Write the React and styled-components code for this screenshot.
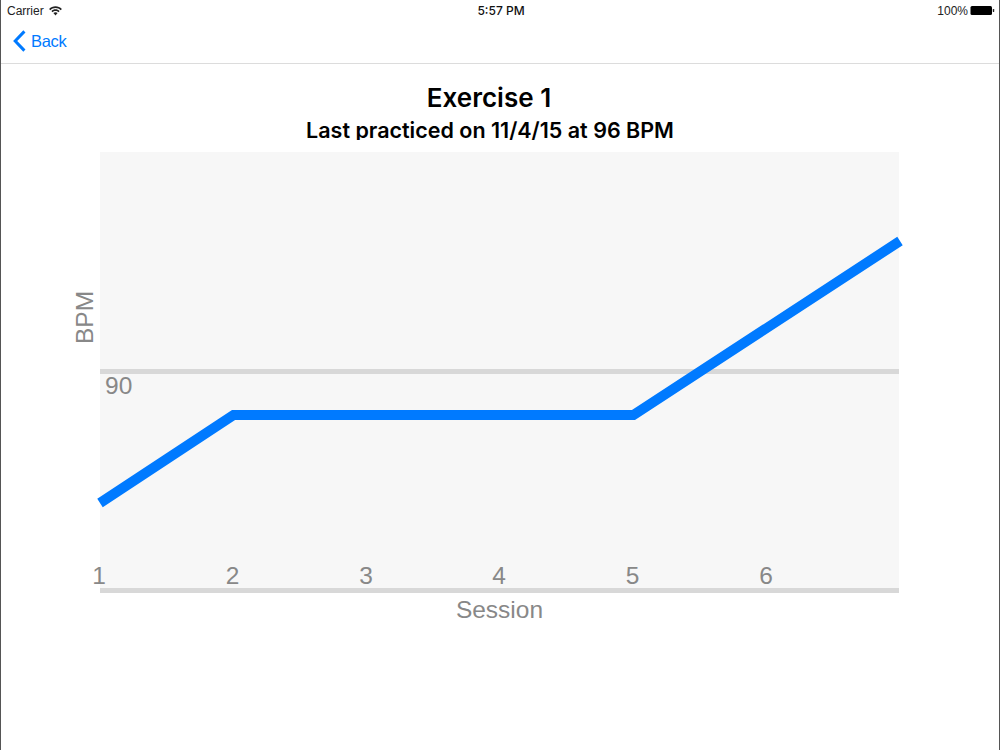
import React from "react";
import styled, { createGlobalStyle } from "styled-components";

const Global = createGlobalStyle`
  html, body { margin: 0; padding: 0; background: #fff; }
  #root { width: 1000px; height: 750px; }
`;

const Screen = styled.div`
  box-sizing: border-box;
  width: 1000px;
  height: 750px;
  overflow: hidden;
  background: #fff;
  border-left: 1px solid #555;
  border-right: 1px solid #555;
  display: flex;
  flex-direction: column;
  font-family: Inter, "Liberation Sans", sans-serif;
`;

const StatusBar = styled.div`
  height: 21px;
  padding: 0 4px 0 6px;
  display: grid;
  grid-template-columns: 1fr auto 1fr;
  align-items: center;
  font-family: "Liberation Sans", sans-serif;
  font-size: 12px;
  color: #222;
`;

const StatusLeft = styled.div`
  display: flex;
  align-items: center;
  gap: 5px;
`;

const StatusRight = styled.div`
  display: flex;
  align-items: center;
  justify-content: flex-end;
  gap: 2px;
`;

const Clock = styled.div`
  font-family: Inter, sans-serif;
  font-weight: 500;
  font-size: 12px;
  color: #111;
`;

const NavBar = styled.div`
  height: 43px;
  box-sizing: border-box;
  border-bottom: 1px solid #dcdcdc;
  display: flex;
  align-items: center;
  padding: 0 0 2px 12px;
  gap: 5px;
  color: #007aff;
  font-family: "Liberation Sans", sans-serif;
  font-size: 16.5px;
  letter-spacing: -0.3px;
`;

const Heading = styled.div`
  text-align: center;
  color: #000;
  font-weight: 600;
`;

const Title = styled(Heading)`
  width: 976px;
  margin-top: 19px;
  font-size: 26px;
  line-height: 30px;
`;

const Subtitle = styled(Heading)`
  width: 978px;
  margin-top: 3px;
  height: 24px;
  overflow: hidden;
  font-size: 21.5px;
  line-height: 28px;
`;

const Chart = styled.svg`
  display: block;
  flex: none;
`;

const AxisText = styled.text`
  font-family: "Liberation Sans", sans-serif;
  font-size: 24.5px;
  fill: #888;
`;

const sessions = [
  [99, "1"],
  [232.5, "2"],
  [366, "3"],
  [499, "4"],
  [632.5, "5"],
  [766, "6"],
];

export default function App() {
  return (
    <>
      <Global />
      <Screen>
        <StatusBar>
          <StatusLeft>
            <span>Carrier</span>
            <svg width="13" height="10" viewBox="0 0 13 10" fill="#222">
              <path d="M6.5 0.2C4 0.2 1.8 1.2 0.1 2.9L1.3 4.2C2.7 2.8 4.5 2 6.5 2S10.3 2.8 11.7 4.2L12.9 2.9C11.2 1.2 9 .2 6.5 .2Z" />
              <path d="M6.5 3.3C5 3.3 3.5 3.9 2.4 5L3.5 6.3C4.3 5.5 5.3 5 6.5 5S8.7 5.5 9.5 6.3L10.6 5C9.5 3.9 8 3.3 6.5 3.3Z" />
              <path d="M6.5 6.2C5.7 6.2 5 6.5 4.4 7.1L6.5 9.6L8.6 7.1C8 6.5 7.3 6.2 6.5 6.2Z" />
            </svg>
          </StatusLeft>
          <Clock>5:57 PM</Clock>
          <StatusRight>
            <span>100%</span>
            <svg width="25" height="11" viewBox="0 0 25 11">
              <rect x="0.5" y="1" width="21.5" height="9" rx="1.5" fill="#000" />
              <rect x="22.8" y="4" width="1.4" height="3" rx="0.6" fill="#222" />
            </svg>
          </StatusRight>
        </StatusBar>
        <NavBar>
          <svg width="13" height="22" viewBox="0 0 13 22" fill="none">
            <path d="M11.4 1.4L2.2 11L11.4 20.6" stroke="#007aff" strokeWidth="3" />
          </svg>
          <span>Back</span>
        </NavBar>
        <Title>Exercise 1</Title>
        <Subtitle>Last practiced on 11/4/15 at 96 BPM</Subtitle>
        <Chart width="998" height="500" viewBox="1 140 998 500">
          <rect x="100" y="152" width="799" height="441" fill="#f7f7f7" />
          <rect x="100" y="369" width="799" height="5" fill="#d8d8d8" />
          <rect x="100" y="588" width="799" height="5" fill="#d8d8d8" />
          <polyline
            points="100,503 233.5,415 633.5,415 900,241"
            fill="none"
            stroke="#007aff"
            strokeWidth="10"
          />
          <AxisText x="105" y="394">90</AxisText>
          {sessions.map(([x, label]) => (
            <AxisText key={label} x={x} y="584" textAnchor="middle">{label}</AxisText>
          ))}
          <AxisText x="499.5" y="618" textAnchor="middle">Session</AxisText>
          <AxisText transform="translate(93 344) rotate(-90)">BPM</AxisText>
        </Chart>
      </Screen>
    </>
  );
}
